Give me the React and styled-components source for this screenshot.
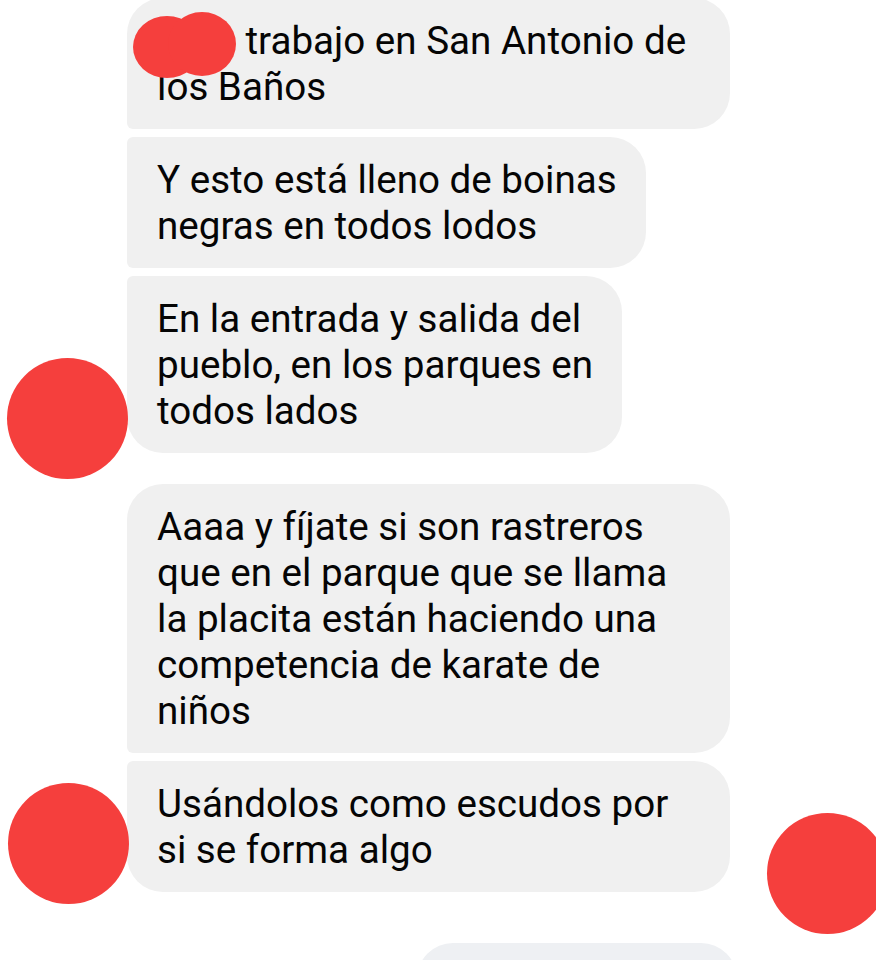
import React from "react";
import styled, { createGlobalStyle } from "styled-components";

const GlobalStyle = createGlobalStyle`
  html, body {
    margin: 0;
    padding: 0;
    background: #fff;
  }
  body {
    font-family: Roboto, "Noto Sans", "Liberation Sans", sans-serif;
    color: #050505;
    overflow: hidden;
  }
`;

const RED = "#f53f3d";

const Page = styled.div`
  position: relative;
  width: 876px;
  height: 960px;
  overflow: hidden;
`;

const Thread = styled.div`
  display: flex;
  flex-direction: column;
  padding-left: 127px;
  margin-top: -2px;
`;

const Group = styled.div`
  position: relative;
  display: flex;
  flex-direction: column;
  align-items: flex-start;
  gap: 8px;
  margin-top: ${p => p.$gap || 0}px;
  padding-left: ${p => p.$indent || 0}px;
`;

const Bubble = styled.div`
  box-sizing: border-box;
  width: ${p => (p.$full ? "603px" : "fit-content")};
  padding: 20px 29px 19px 30px;
  background: ${p => p.$tone || "#f0f0f0"};
  font-size: 38.6px;
  line-height: 46px;
  white-space: nowrap;
  border-radius: ${p => (p.$first ? 36 : 6)}px 36px 36px ${p => (p.$last ? 36 : 6)}px;
`;

const Stub = styled(Bubble)`
  width: 320px;
  height: 80px;
`;

const Avatar = styled.div`
  position: absolute;
  width: 121px;
  height: 121px;
  border-radius: 50%;
  background: ${RED};
  left: ${p => p.$left}px;
  top: ${p => p.$top}px;
`;

const Redacted = styled.span`
  position: relative;
  display: inline-block;
  width: 80px;
  height: 0.7em;
  margin-right: 0.22em;
  svg {
    position: absolute;
    left: -25px;
    bottom: -25px;
  }
`;

const Blob = () => (
  <Redacted>
    <svg width="106" height="68" viewBox="0 0 106 68">
      <ellipse cx="35" cy="36" rx="34" ry="31" fill={RED} />
      <ellipse cx="70" cy="33" rx="34" ry="32" fill={RED} />
    </svg>
  </Redacted>
);

const Lines = ({ lines }) =>
  lines.map((l, i) => (
    <React.Fragment key={i}>
      {i > 0 && <br />}
      {l}
    </React.Fragment>
  ));

export default function App() {
  return (
    <Page>
      <GlobalStyle />
      <Thread>
        <Group>
          <Bubble $full $first>
            <Blob />
            trabajo en San Antonio de
            <br />
            los Baños
          </Bubble>
          <Bubble>
            <Lines lines={["Y esto está lleno de boinas", "negras en todos lodos"]} />
          </Bubble>
          <Bubble $last>
            <Lines
              lines={["En la entrada y salida del", "pueblo, en los parques en", "todos lados"]}
            />
          </Bubble>
          <Avatar $left={-120} $top={360} />
        </Group>
        <Group $gap={31}>
          <Bubble $full $first>
            <Lines
              lines={[
                "Aaaa y fíjate si son rastreros",
                "que en el parque que se llama",
                "la placita están haciendo una",
                "competencia de karate de",
                "niños"
              ]}
            />
          </Bubble>
          <Bubble $full $last>
            <Lines lines={["Usándolos como escudos por", "si se forma algo"]} />
          </Bubble>
          <Avatar $left={-119} $top={299} />
          <Avatar $left={640} $top={329} />
        </Group>
        <Group $gap={51} $indent={290}>
          <Stub $first $tone="#eef0f3" />
        </Group>
      </Thread>
    </Page>
  );
}
